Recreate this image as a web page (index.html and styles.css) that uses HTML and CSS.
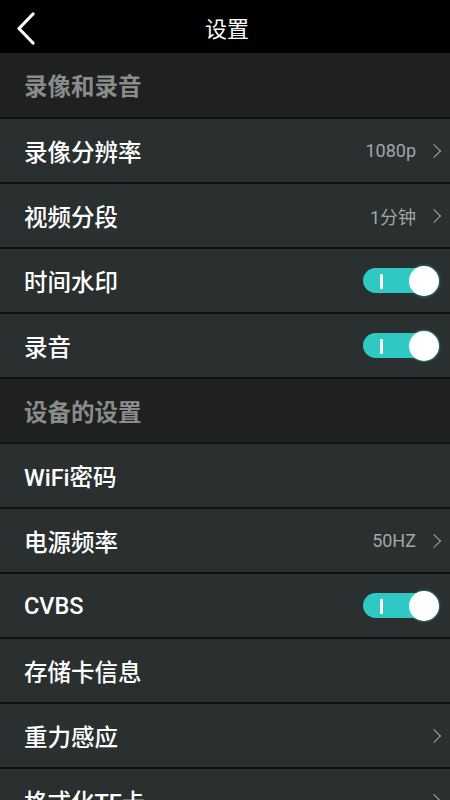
FILE: index.html
```html
<!DOCTYPE html>
<html lang="zh-CN">
<head>
<meta charset="UTF-8" />
<meta name="viewport" content="width=device-width, initial-scale=1.0" />
<title>设置</title>
<link rel="stylesheet" href="styles.css">
</head>
<body>
  <div class="topbar">
    <a class="back" href="#">
      <svg width="24" height="34" viewBox="0 0 24 34"><polyline points="17,2 3,16.5 17,31" fill="none" stroke="#fff" stroke-width="3.2" stroke-linecap="round" stroke-linejoin="round"/></svg>
    </a>
    <h1>设置</h1>
  </div>

  <ul class="list">
    <li class="section first">录像和录音</li>
    <li class="item"><span class="label">录像分辨率</span><span class="value">1080p</span><i class="arrow"></i></li>
    <li class="item"><span class="label">视频分段</span><span class="value">1分钟</span><i class="arrow"></i></li>
    <li class="item"><span class="label">时间水印</span><span class="switch on"><b></b></span></li>
    <li class="item"><span class="label">录音</span><span class="switch on"><b></b></span></li>

    <li class="section">设备的设置</li>
    <li class="item"><span class="label">WiFi密码</span></li>
    <li class="item"><span class="label">电源频率</span><span class="value">50HZ</span><i class="arrow"></i></li>
    <li class="item"><span class="label">CVBS</span><span class="switch on"><b></b></span></li>
    <li class="item"><span class="label">存储卡信息</span></li>
    <li class="item"><span class="label">重力感应</span><i class="arrow"></i></li>
    <li class="item"><span class="label">格式化TF卡</span><i class="arrow"></i></li>
  </ul>
</body>
</html>
```

FILE: styles.css
```css
body {
  margin: 0;
  background: #2a2f30;
  font-family: Roboto, "Noto Sans CJK SC", sans-serif;
  overflow: hidden;
}

.topbar {
  height: 53px;
  background: #000;
  display: flex;
  align-items: center;
  justify-content: center;
  position: relative;
}

.topbar h1 {
  margin: 0 0 0 4px;
  color: #fff;
  font-size: 22px;
  font-weight: 400;
}

.back {
  position: absolute;
  left: 16px;
  top: 12px;
  display: block;
  line-height: 0;
}

.list {
  list-style: none;
  margin: 0;
  padding: 0;
}

.list li {
  height: 63px;
  border-bottom: 2px solid #101212;
  display: flex;
  align-items: center;
  padding: 0 9px 0 24px;
  font-size: 23.5px;
}

.list li.first {
  height: 64px;
}

.section {
  background: #1f2121;
  color: #8a8c8c;
  font-weight: 700;
}

.item {
  background: #2a2f30;
  color: #fff;
  font-weight: 500;
}

.label {
  flex: 1;
}

.value {
  color: #a3a6a6;
  font-size: 18px;
  font-weight: 400;
  margin-right: 13px;
}

.arrow {
  width: 9px;
  height: 9px;
  border-top: 1.8px solid #a3a6a6;
  border-right: 1.8px solid #a3a6a6;
  transform: rotate(45deg);
  margin-right: 2px;
}

.switch {
  width: 76px;
  height: 30px;
  position: relative;
  margin-right: 2px;
}

.switch::before {
  content: "";
  position: absolute;
  left: 0;
  top: 2.5px;
  width: 68px;
  height: 25px;
  border-radius: 13px;
  background: #2fc8c5;
}

.switch::after {
  content: "";
  position: absolute;
  left: 17px;
  top: 8px;
  width: 2.5px;
  height: 15px;
  background: #fff;
  border-radius: 1px;
}

.switch b {
  position: absolute;
  right: 0;
  top: 0;
  width: 30px;
  height: 30px;
  border-radius: 50%;
  background: #fff;
  box-shadow: 0 0 3px rgba(60, 220, 215, 0.8);
}
```
